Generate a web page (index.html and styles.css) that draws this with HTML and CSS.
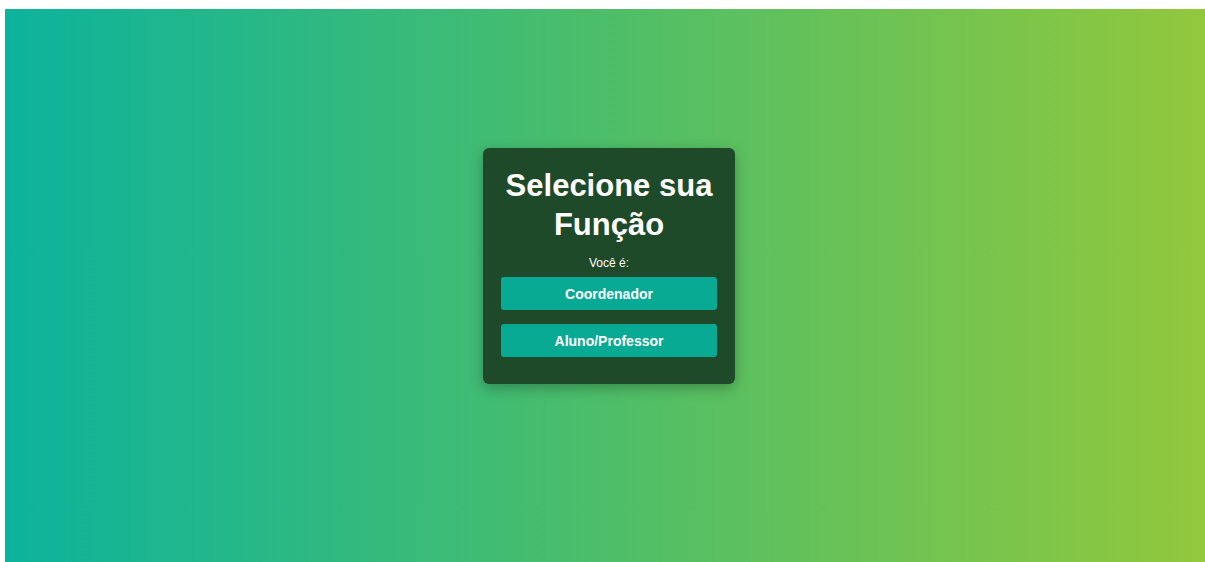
FILE: index.html
```html
<!DOCTYPE html>
<html lang="pt-BR">
<head>
<meta charset="utf-8">
<title>Selecione sua Função</title>
<link rel="stylesheet" href="styles.css">
</head>
<body>
  <main class="page">
    <section class="role-card">
      <h1 class="role-title">Selecione sua Função</h1>
      <p class="role-prompt">Você é:</p>
      <div class="role-actions">
        <button class="role-btn" type="button">Coordenador</button>
        <button class="role-btn" type="button">Aluno/Professor</button>
      </div>
    </section>
  </main>
</body>
</html>
```

FILE: styles.css
```css
* {
  box-sizing: border-box;
}

html, body {
  height: 100%;
}

body {
  margin: 9px 0 0 5px;
  background: #ffffff;
  font-family: "Liberation Sans", Arial, sans-serif;
}

.page {
  min-height: calc(100vh - 9px);
  background: linear-gradient(to right, #0cb39c 0%, #4dbe69 50%, #92c83c 100%);
  display: flex;
  justify-content: center;
  align-items: flex-start;
  padding: 139px 0 0 8px;
}

.role-card {
  width: 252px;
  padding: 18px;
  background: #1f4a2a;
  border-radius: 6px;
  box-shadow: 0 4px 14px rgba(0, 0, 0, 0.28);
  text-align: center;
  color: #ffffff;
}

.role-title {
  margin: 0;
  font-size: 31px;
  line-height: 39px;
  font-weight: bold;
}

.role-prompt {
  margin: 12px 0 7px;
  font-size: 12px;
  line-height: 14px;
}

.role-actions {
  display: flex;
  flex-direction: column;
  gap: 14px;
  padding-bottom: 9px;
}

.role-btn {
  height: 33px;
  width: 100%;
  border: none;
  border-radius: 3px;
  background: #08aa94;
  color: #ffffff;
  font-family: "Liberation Sans", Arial, sans-serif;
  font-size: 14px;
  font-weight: bold;
  cursor: pointer;
}
```
